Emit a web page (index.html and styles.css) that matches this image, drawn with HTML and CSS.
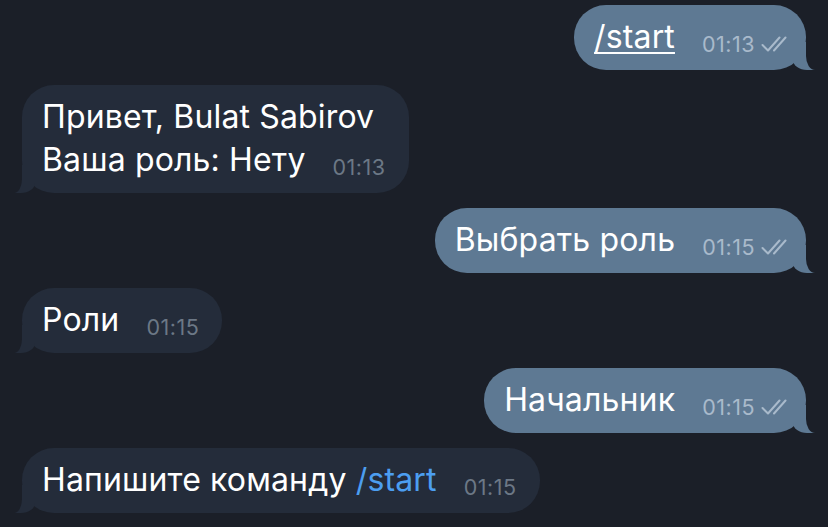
FILE: index.html
```html
<!DOCTYPE html>
<html lang="ru">
<head>
<meta charset="utf-8">
<title>Chat</title>
<link rel="stylesheet" href="styles.css">
</head>
<body>
<div class="chat">
  <div class="bubble out">
    <span class="text"><span class="cmd">/start</span></span><span class="meta"><span class="time">01:13</span><svg class="checks" width="26" height="16" viewBox="0 0 26 16"><path d="M1.5 9 L7 14.5 L18.5 1.5 M13 14.5 L24.5 1.5"/></svg></span>
  </div>
  <div class="bubble in">
    <span class="text">Привет, Bulat Sabirov<br>Ваша роль: Нету</span><span class="meta"><span class="time">01:13</span></span>
  </div>
  <div class="bubble out">
    <span class="text">Выбрать роль</span><span class="meta"><span class="time">01:15</span><svg class="checks" width="26" height="16" viewBox="0 0 26 16"><path d="M1.5 9 L7 14.5 L18.5 1.5 M13 14.5 L24.5 1.5"/></svg></span>
  </div>
  <div class="bubble in">
    <span class="text">Роли</span><span class="meta"><span class="time">01:15</span></span>
  </div>
  <div class="bubble out">
    <span class="text">Начальник</span><span class="meta"><span class="time">01:15</span><svg class="checks" width="26" height="16" viewBox="0 0 26 16"><path d="M1.5 9 L7 14.5 L18.5 1.5 M13 14.5 L24.5 1.5"/></svg></span>
  </div>
  <div class="bubble in">
    <span class="text">Напишите команду <span class="link">/start</span></span><span class="meta"><span class="time">01:15</span></span>
  </div>
</div>
</body>
</html>
```
FILE: styles.css
```css
html, body {
  margin: 0;
  padding: 0;
  background: #1b1f28;
}
body {
  font-family: Inter, "Noto Sans", sans-serif;
  color: #ffffff;
  width: 828px;
  height: 527px;
  overflow: hidden;
}
.chat {
  display: flex;
  flex-direction: column;
  gap: 15px;
  padding: 5px 22px;
}
.bubble {
  position: relative;
  display: block;
  border-radius: 32px;
  padding: 10px 23px 12px 20px;
  font-size: 32px;
  line-height: 43px;
  letter-spacing: 0.15px;
  white-space: nowrap;
}
.bubble.in {
  align-self: flex-start;
  background: #242c3a;
}
.bubble.out {
  align-self: flex-end;
  background: #5e7993;
  padding-right: 19px;
}
.cmd {
  text-decoration: underline;
  text-decoration-thickness: 2px;
  text-underline-offset: 4px;
}
.link {
  color: #4c9ef0;
}
.meta {
  display: inline-flex;
  align-items: baseline;
  gap: 6px;
  margin-left: 27px;
  vertical-align: -4px;
  line-height: 20px;
  letter-spacing: 0;
}
.time {
  font-size: 21.5px;
  letter-spacing: 0.5px;
}
.in .time {
  color: #6c7886;
}
.out .time {
  color: #a9bacb;
}
.checks {
  display: block;
}
.checks path {
  fill: none;
  stroke: #a9bacb;
  stroke-width: 2;
  stroke-linecap: round;
  stroke-linejoin: round;
}
.bubble::before,
.bubble::after {
  content: "";
  position: absolute;
  bottom: 0;
  height: 28px;
}
.out::before {
  right: -9px;
  width: 22px;
  background: #5e7993;
  border-bottom-left-radius: 14px 10px;
}
.out::after {
  right: -10px;
  width: 10px;
  background: #1b1f28;
  border-bottom-left-radius: 9px 14px;
}
.in::before {
  left: -8px;
  width: 21px;
  background: #242c3a;
  border-bottom-right-radius: 14px 10px;
}
.in::after {
  left: -10px;
  width: 10px;
  background: #1b1f28;
  border-bottom-right-radius: 8px 14px;
}
```
